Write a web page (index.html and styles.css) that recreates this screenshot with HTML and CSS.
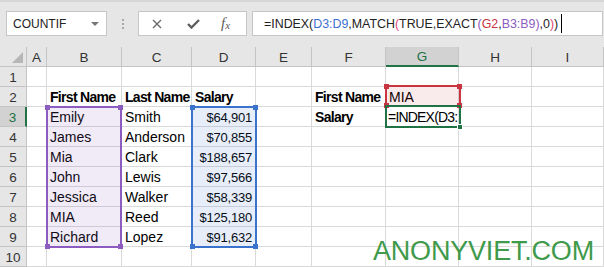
FILE: index.html
```html
<!DOCTYPE html>
<html>
<head>
<meta charset="utf-8">
<link rel="stylesheet" href="styles.css">
</head>
<body>
<div class="toolbar">
  <div class="namebox"><span>COUNTIF</span><span class="caret"></span></div>
  <div class="dots"><i></i><i></i><i></i></div>
  <div class="fxbox">
    <svg class="ic-x" width="10" height="10" viewBox="0 0 10 10"><path d="M1 1L9 9M9 1L1 9" stroke="#6a6a6a" stroke-width="1.4" fill="none"/></svg>
    <svg class="ic-ok" width="13" height="10" viewBox="0 0 13 10"><path d="M1 5L4.5 8.5L12 1" stroke="#5e5e5e" stroke-width="2.4" fill="none"/></svg>
    <span class="fx">f<sub>x</sub></span>
  </div>
  <div class="formula"><span>=INDEX(</span><span class="blue">D3:D9</span><span>,MATCH</span><span class="pink">(</span><span>TRUE,EXACT</span><span class="purple">(</span><span class="red">G2</span><span>,</span><span class="purple">B3:B9</span><span class="purple">)</span><span>,0</span><span class="pink">)</span><span>)</span><span class="cursor"></span></div>
</div>

<div class="sheet">
  <div class="h corner"><span class="tri"></span></div><div class="h">A</div><div class="h">B</div><div class="h">C</div><div class="h">D</div><div class="h">E</div><div class="h">F</div><div class="h hsel">G</div><div class="h">H</div><div class="h">I</div>

  <div class="r">1</div><div class="c"></div><div class="c"></div><div class="c"></div><div class="c"></div><div class="c"></div><div class="c"></div><div class="c"></div><div class="c"></div><div class="c"></div>

  <div class="r">2</div><div class="c"></div><div class="c b">First Name</div><div class="c b">Last Name</div><div class="c b">Salary</div><div class="c"></div><div class="c b">First Name</div><div class="c">MIA</div><div class="c"></div><div class="c"></div>

  <div class="r rsel">3</div><div class="c"></div><div class="c">Emily</div><div class="c">Smith</div><div class="c n">$64,901</div><div class="c"></div><div class="c b">Salary</div><div class="c edit">=INDEX(D3:</div><div class="c"></div><div class="c"></div>

  <div class="r">4</div><div class="c"></div><div class="c">James</div><div class="c">Anderson</div><div class="c n">$70,855</div><div class="c"></div><div class="c"></div><div class="c"></div><div class="c"></div><div class="c"></div>

  <div class="r">5</div><div class="c"></div><div class="c">Mia</div><div class="c">Clark</div><div class="c n">$188,657</div><div class="c"></div><div class="c"></div><div class="c"></div><div class="c"></div><div class="c"></div>

  <div class="r">6</div><div class="c"></div><div class="c">John</div><div class="c">Lewis</div><div class="c n">$97,566</div><div class="c"></div><div class="c"></div><div class="c"></div><div class="c"></div><div class="c"></div>

  <div class="r">7</div><div class="c"></div><div class="c">Jessica</div><div class="c">Walker</div><div class="c n">$58,339</div><div class="c"></div><div class="c"></div><div class="c"></div><div class="c"></div><div class="c"></div>

  <div class="r">8</div><div class="c"></div><div class="c">MIA</div><div class="c">Reed</div><div class="c n">$125,180</div><div class="c"></div><div class="c"></div><div class="c"></div><div class="c"></div><div class="c"></div>

  <div class="r">9</div><div class="c"></div><div class="c">Richard</div><div class="c">Lopez</div><div class="c n">$91,632</div><div class="c"></div><div class="c"></div><div class="c"></div><div class="c"></div><div class="c"></div>

  <div class="r">10</div><div class="c"></div><div class="c"></div><div class="c"></div><div class="c"></div><div class="c"></div><div class="c"></div><div class="c"></div><div class="c"></div><div class="c"></div>

  <div class="range rg-purple"><i class="k tl"></i><i class="k tr"></i><i class="k bl"></i><i class="k br"></i></div>
  <div class="range rg-blue"><i class="k tl"></i><i class="k tr"></i><i class="k bl"></i><i class="k br"></i></div>
  <div class="range rg-red"><i class="k tl"></i><i class="k tr"></i><i class="k bl"></i><i class="k br"></i></div>
  <div class="range rg-green"><i class="k br"></i></div>
</div>

<div class="watermark">ANONYVIET.COM</div>
</body>
</html>
```

FILE: styles.css
```css
* { box-sizing: border-box; margin: 0; padding: 0; }
html, body { width: 604px; height: 267px; overflow: hidden; }
body {
  background: #fff;
  font-family: "Liberation Sans", Arial, sans-serif;
  position: relative;
  color: #000;
}

/* ---------- formula bar ---------- */
.toolbar {
  height: 47px;
  background: #e6e6e6;
  border-top: 2px solid #d6d6d6;
  display: flex;
  align-items: flex-start;
  padding: 9px 0 0 6px;
}
.namebox {
  width: 101px;
  height: 25px;
  background: #fff;
  border: 1px solid #c6c6c6;
  display: flex;
  align-items: center;
  justify-content: space-between;
  padding-left: 6px;
  font-size: 12px;
  color: #222;
}
.caret {
  width: 0; height: 0;
  border-left: 4px solid transparent;
  border-right: 4px solid transparent;
  border-top: 4px solid #777;
  margin-right: 7px;
}
.dots {
  width: 31px;
  height: 25px;
  display: flex;
  flex-direction: column;
  align-items: center;
  justify-content: center;
  gap: 2px;
}
.dots i { display: block; width: 2px; height: 2px; background: #a8a8a8; }
.fxbox {
  width: 109px;
  height: 25px;
  background: #fff;
  border: 1px solid #c6c6c6;
  display: flex;
  align-items: center;
  padding-left: 13px;
}
.ic-x { margin-right: 25px; }
.ic-ok { margin-right: 21px; }
.fx {
  font-family: "Liberation Serif", serif;
  font-style: italic;
  font-size: 15px;
  color: #5c5c5c;
  line-height: 1;
}
.fx sub { font-size: 11px; vertical-align: -1px; }
.formula {
  margin-left: 5px;
  width: 351px;
  height: 25px;
  background: #fff;
  border: 1px solid #c6c6c6;
  display: flex;
  align-items: center;
  padding-left: 11px;
  font-size: 12.4px;
  color: #222;
  white-space: nowrap;
}
.blue { color: #3c6fcf; }
.pink { color: #e0457b; }
.purple { color: #8c5cc0; }
.red { color: #c8343f; }
.cursor { display: inline-block; width: 1px; height: 19px; background: #000; margin-left: 3px; }

/* ---------- grid ---------- */
.sheet {
  position: relative;
  display: grid;
  grid-template-columns: 27px 20px 75px 70px 64px 56px 74px 73px 73px 72px;
  grid-template-rows: repeat(11, 20px);
}
.h, .r {
  background: #e6e6e6;
  border-right: 1px solid #c4c4c4;
  border-bottom: 1px solid #c4c4c4;
  color: #333;
  font-size: 13.5px;
  display: flex;
  align-items: center;
  justify-content: center;
  padding-top: 1px;
}
.corner { position: relative; }
.tri {
  position: absolute;
  right: 3px; bottom: 3px;
  width: 0; height: 0;
  border-left: 11px solid transparent;
  border-bottom: 11px solid #b6b6b6;
}
.hsel {
  background: #d2d2d2;
  color: #217346;
  border-bottom: 2px solid #217346;
}
.rsel {
  background: #d2d2d2;
  color: #217346;
  border-right: 2px solid #217346;
}
.c {
  border-right: 1px solid #d9d9d9;
  border-bottom: 1px solid #d9d9d9;
  font-size: 14px;
  line-height: 19px;
  padding: 1px 3px 0 3px;
  white-space: nowrap;
  overflow: hidden;
}
.b { font-weight: bold; letter-spacing: -0.7px; }
.n { text-align: right; font-size: 13px; letter-spacing: -0.2px; padding-right: 3px; }
.edit { padding-left: 2px; padding-right: 0; letter-spacing: -0.8px; }

/* ---------- reference ranges ---------- */
.range { position: absolute; border: 2px solid; }
.range .k { position: absolute; width: 5px; height: 5px; display: block; }
.k.tl { left: -3px; top: -3px; }
.k.tr { right: -3px; top: -3px; }
.k.bl { left: -3px; bottom: -3px; }
.k.br { right: -3px; bottom: -3px; }

.rg-purple { left: 46px; top: 59px; width: 76px; height: 142px; border-color: #8c5cc0; background: rgba(140, 92, 192, 0.12); }
.rg-purple .k { background: #8c5cc0; }
.rg-blue { left: 191px; top: 59px; width: 66px; height: 142px; border-color: #3b72cc; background: rgba(59, 114, 204, 0.12); }
.rg-blue .k { background: #3b72cc; }
.rg-red { left: 385px; top: 38px; width: 76px; height: 22px; border-color: #c8343f; background: rgba(200, 52, 63, 0.1); }
.rg-red .k { background: #c8343f; }
.rg-green { left: 385px; top: 58px; width: 76px; height: 23px; border-color: #217346; }
.rg-green .k { background: #217346; border: 1px solid #fff; width: 6px; height: 6px; right: -4px; bottom: -4px; }

/* ---------- watermark ---------- */
.watermark {
  position: absolute;
  left: 373px;
  bottom: 0;
  line-height: normal;
  font-family: "Liberation Sans", Arial, sans-serif;
  font-size: 27px;
  letter-spacing: -0.2px;
  color: #3f9a4c;
  white-space: nowrap;
}
```
